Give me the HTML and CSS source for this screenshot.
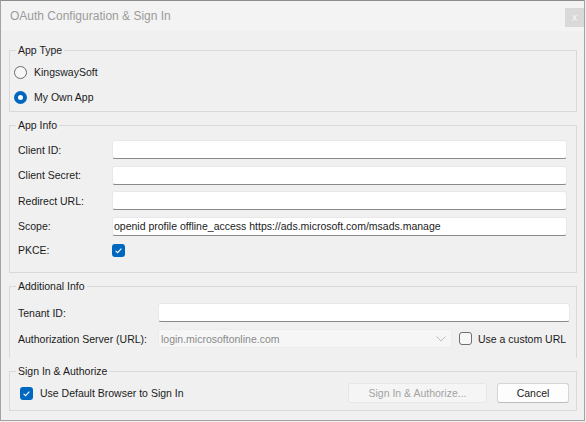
FILE: index.html
```html
<!DOCTYPE html>
<html>
<head>
<meta charset="utf-8">
<link rel="stylesheet" href="styles.css">
</head>
<body>
<div class="window">
  <div class="titlebar">
    <span class="title">OAuth Configuration &amp; Sign In</span>
    <span class="close">x</span>
  </div>
  <div class="content">
    <fieldset class="group group-type">
      <legend>App Type</legend>
      <div class="radio-row"><span class="radio"></span><span>KingswaySoft</span></div>
      <div class="radio-row"><span class="radio checked"></span><span>My Own App</span></div>
    </fieldset>

    <fieldset class="group group-info">
      <legend>App Info</legend>
      <div class="form-grid info-grid">
        <label>Client ID:</label><div class="input"></div>
        <label>Client Secret:</label><div class="input"></div>
        <label>Redirect URL:</label><div class="input"></div>
        <label>Scope:</label><div class="input">openid profile offline_access https://ads.microsoft.com/msads.manage</div>
        <label class="pkce-label">PKCE:</label>
        <div class="pkce-cell"><span class="checkbox checked"><svg viewBox="0 0 13 13" width="13" height="13"><path d="M3.6 6.8 L5.6 8.7 L9.4 4.7" fill="none" stroke="#ffffff" stroke-width="1.1"/></svg></span></div>
      </div>
    </fieldset>

    <fieldset class="group group-add">
      <legend>Additional Info</legend>
      <div class="form-grid add-grid">
        <label>Tenant ID:</label><div class="input"></div>
        <label>Authorization Server (URL):</label>
        <div class="server-cell">
          <div class="combo"><span>login.microsoftonline.com</span><svg width="10" height="6" viewBox="0 0 10 6"><path d="M0.5 0.5 L5 5 L9.5 0.5" stroke="#bdbdbd" fill="none"/></svg></div>
          <span class="checkbox"></span>
          <span class="check-text">Use a custom URL</span>
        </div>
      </div>
    </fieldset>

    <fieldset class="group group-sign">
      <legend>Sign In &amp; Authorize</legend>
      <div class="sign-row">
        <span class="checkbox checked"><svg viewBox="0 0 13 13" width="13" height="13"><path d="M3.6 6.8 L5.6 8.7 L9.4 4.7" fill="none" stroke="#ffffff" stroke-width="1.1"/></svg></span>
        <span class="check-text">Use Default Browser to Sign In</span>
        <span class="btn btn-disabled">Sign In &amp; Authorize...</span>
        <span class="btn btn-cancel">Cancel</span>
      </div>
    </fieldset>
  </div>
</div>
</body>
</html>
```

FILE: styles.css
```css
* { box-sizing: border-box; }
html, body { margin: 0; padding: 0; background: #f0f0f0; }
body {
  font-family: "Liberation Sans", Arial, sans-serif;
  font-size: 10.5px;
  color: #1b1b1b;
}
.window {
  width: 585px;
  height: 421px;
  border: 1px solid #a3a3a3;
  border-top-color: #8c8c8c;
  background: #f0f0f0;
  display: flex;
  flex-direction: column;
}
.titlebar {
  height: 30px;
  flex: none;
  background: #f3f3f3;
  display: flex;
  align-items: center;
  justify-content: space-between;
}
.title {
  font-size: 12px;
  line-height: 14px;
  color: #9b9b9b;
  margin-left: 9px;
}
.close {
  align-self: flex-start;
  margin-top: 7px;
  width: 19px;
  height: 19px;
  background: #d9d9d9;
  color: #f6f6f6;
  font-size: 11px;
  line-height: 19px;
  text-align: center;
}
.content {
  padding: 12px 7px 0 8px;
  display: flex;
  flex-direction: column;
}
.group {
  margin: 0;
  min-width: 0;
  border: 1px solid #d9d9d9;
  padding: 5px 8px 4px 8px;
}
.group + .group { margin-top: 6px; }
legend {
  padding: 0 2px;
  margin-left: -2px;
  line-height: 14px;
  color: #1b1b1b;
}
.group-type { padding: 5px 8px 4px 8px; }
.radio-row {
  height: 20px;
  display: flex;
  align-items: center;
  margin-left: -4px;
}
.radio-row + .radio-row { margin-top: 5px; }
.radio {
  width: 13px;
  height: 13px;
  border-radius: 50%;
  border: 1px solid #6a6a6a;
  background: #f7f7f7;
  margin-right: 7px;
  flex: none;
}
.radio.checked {
  border: 4px solid #0067c0;
  background: #ffffff;
}
.group-info { padding: 8px 9px 14px 8px; }
.form-grid {
  display: grid;
  align-items: center;
}
.info-grid {
  grid-template-columns: 94px 1fr;
  grid-template-rows: 19px 19px 19px 19px 16px;
  row-gap: 6.5px;
}
.pkce-cell { display: flex; align-items: center; height: 16px; }
.input {
  height: 19px;
  background: #ffffff;
  border: 1px solid #e8e8e8;
  border-bottom-color: #8a8a8a;
  border-radius: 3px;
  padding-left: 1px;
  line-height: 17px;
  white-space: nowrap;
  overflow: hidden;
}
.checkbox {
  width: 13px;
  height: 13px;
  border-radius: 3px;
  border: 1px solid #6f6f6f;
  background: #f7f7f7;
  flex: none;
  display: inline-flex;
}
.checkbox.checked {
  border: none;
  background: #0067c0;
}
.checkbox svg { display: block; }
.group-add {
  padding: 10px 6px 10px 8px;
  border-bottom: none;
}
.add-grid {
  grid-template-columns: 140px 1fr;
  grid-template-rows: 19px 19px;
  row-gap: 7px;
}
.server-cell {
  display: flex;
  align-items: center;
  height: 19px;
}
.combo {
  width: 294px;
  height: 19px;
  flex: none;
  background: #f6f6f6;
  border: 1px solid #ececec;
  border-radius: 3px;
  color: #8a8a8a;
  padding: 0 5px 0 2px;
  display: flex;
  align-items: center;
  justify-content: space-between;
}
.server-cell .checkbox { margin-left: 7px; }
.check-text { margin-left: 6px; white-space: nowrap; }
.group-sign { padding: 5px 7px 7px 8px; }
.sign-row {
  display: flex;
  align-items: center;
  height: 20px;
}
.sign-row .checkbox { margin-left: 2px; }
.sign-row .check-text { margin-left: 7px; }
.btn {
  height: 20px;
  border-radius: 3px;
  display: inline-flex;
  align-items: center;
  justify-content: center;
}
.btn-disabled {
  margin-left: auto;
  width: 139px;
  background: #f5f5f5;
  border: 1px solid #e6e6e6;
  color: #a3a3a3;
}
.btn-cancel {
  margin-left: 10px;
  width: 72px;
  background: #fdfdfd;
  border: 1px solid #d5d5d5;
  border-bottom-color: #bdbdbd;
  color: #1b1b1b;
}
```
